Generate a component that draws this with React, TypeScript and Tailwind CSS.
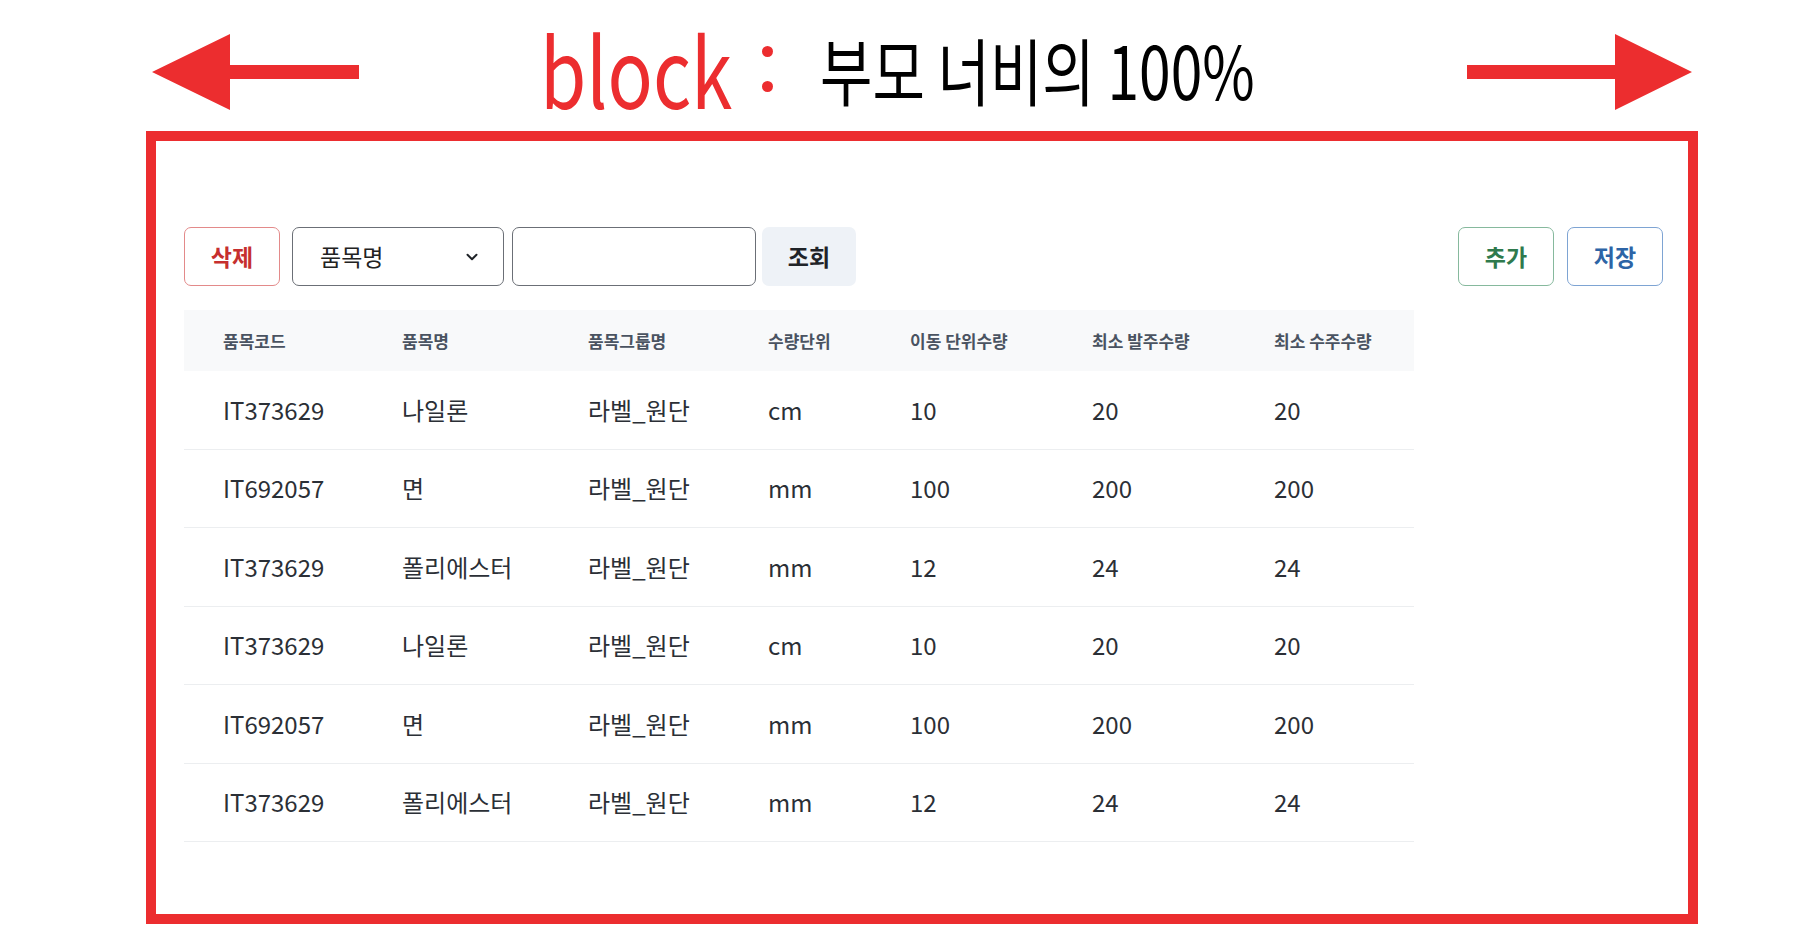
import React from 'react';
import { ChevronDown } from 'lucide-react';

const FONT = '"Noto Sans CJK KR", "Noto Sans", sans-serif';

interface Item {
  code: string;
  name: string;
  group: string;
  unit: string;
  moveQty: number;
  minOrder: number;
  minSales: number;
}

const items: Item[] = [
  { code: 'IT373629', name: '나일론', group: '라벨_원단', unit: 'cm', moveQty: 10, minOrder: 20, minSales: 20 },
  { code: 'IT692057', name: '면', group: '라벨_원단', unit: 'mm', moveQty: 100, minOrder: 200, minSales: 200 },
  { code: 'IT373629', name: '폴리에스터', group: '라벨_원단', unit: 'mm', moveQty: 12, minOrder: 24, minSales: 24 },
  { code: 'IT373629', name: '나일론', group: '라벨_원단', unit: 'cm', moveQty: 10, minOrder: 20, minSales: 20 },
  { code: 'IT692057', name: '면', group: '라벨_원단', unit: 'mm', moveQty: 100, minOrder: 200, minSales: 200 },
  { code: 'IT373629', name: '폴리에스터', group: '라벨_원단', unit: 'mm', moveQty: 12, minOrder: 24, minSales: 24 },
];

// column widths, first one includes the table's left padding
const colClass = [
  'w-[218px] pl-[39px]',
  'w-[186px]',
  'w-[180px]',
  'w-[142px]',
  'w-[182px]',
  'w-[182px]',
  'flex-1',
];

const headers = ['품목코드', '품목명', '품목그룹명', '수량단위', '이동 단위수량', '최소 발주수량', '최소 수주수량'];

function LeftArrow() {
  return (
    <svg width="207" height="76" viewBox="0 0 207 76">
      <polygon points="0,38 78,0 78,31 207,31 207,45 78,45 78,76" fill="#ec2d2f" />
    </svg>
  );
}

function RightArrow() {
  return (
    <svg width="225" height="76" viewBox="0 0 225 76">
      <polygon points="225,38 148,0 148,31 0,31 0,45 148,45 148,76" fill="#ec2d2f" />
    </svg>
  );
}

export default function App() {
  return (
    <div className="w-[1800px] h-[948px] bg-white overflow-hidden" style={{ fontFamily: FONT }}>
      {/* Title */}
      <div className="h-[131px] pt-[4px] flex items-center">
        <div className="ml-[152px] shrink-0 mt-[8px]">
          <LeftArrow />
        </div>
        <span className="ml-[181px] shrink-0 inline-block origin-left scale-x-[0.78] -mr-[54px] text-[96px] leading-[110px] font-normal text-[#ec2d2f] whitespace-nowrap">
          block
        </span>
        <div className="ml-[29px] w-[24px] shrink-0 flex flex-col items-start justify-center gap-[24px] mt-[2px]">
          <div className="w-[11px] h-[11px] rounded-full bg-[#ec2d2f]" />
          <div className="w-[11px] h-[11px] rounded-full bg-[#ec2d2f]" />
        </div>
        <span className="ml-[34px] shrink-0 inline-block origin-left scale-x-[0.78] -mr-[122px] text-[73px] leading-[110px] font-normal text-black whitespace-nowrap">
          부모 너비의 100%
        </span>
        <div className="ml-[212px] shrink-0 mt-[8px]">
          <RightArrow />
        </div>
      </div>

      {/* Block box */}
      <div className="ml-[146px] w-[1552px] h-[793px] border-[10px] border-[#ec2d2f] pt-[86px] pl-[28px] pr-[25px]">
        <div className="flex items-center justify-between">
          <div className="flex items-center">
            <button className="w-[96px] h-[59px] rounded-[7px] border border-[#e38a8a] text-[#c62f2f] text-[23px] font-bold bg-white">
              삭제
            </button>
            <div className="ml-[12px] w-[212px] h-[59px] rounded-[7px] border border-[#6b6f76] flex items-center justify-between pl-[27px] pr-[22px]">
              <span className="text-[23px] text-[#222]">품목명</span>
              <ChevronDown size={18} strokeWidth={2.6} color="#1f2328" />
            </div>
            <input className="ml-[8px] w-[244px] h-[59px] rounded-[7px] border border-[#6b6f76] outline-none px-3" />
            <button className="ml-[6px] w-[94px] h-[59px] rounded-[7px] bg-[#eef2f7] text-[#1f2328] text-[23px] font-bold">
              조회
            </button>
          </div>
          <div className="flex items-center gap-[13px]">
            <button className="w-[96px] h-[59px] rounded-[7px] border border-[#86b99d] text-[#2f7a4d] text-[23px] font-bold bg-white">
              추가
            </button>
            <button className="w-[96px] h-[59px] rounded-[7px] border border-[#7ea4d3] text-[#2d64a6] text-[23px] font-bold bg-white">
              저장
            </button>
          </div>
        </div>

        {/* Table */}
        <div className="mt-[24px] w-[1230px]">
          <div className="h-[61px] bg-[#f8f9fa] flex items-center">
            {headers.map((h, i) => (
              <div key={h} className={`${colClass[i]} text-[17px] font-semibold text-[#4a5361]`}>
                {h}
              </div>
            ))}
          </div>
          {items.map((it, r) => {
            const cells = [it.code, it.name, it.group, it.unit, it.moveQty, it.minOrder, it.minSales];
            return (
              <div key={r} className="h-[78.5px] border-b border-[#eceef0] flex items-center">
                {cells.map((c, i) => (
                  <div key={i} className={`${colClass[i]} text-[24px] text-[#2b2f36]`}>
                    {c}
                  </div>
                ))}
              </div>
            );
          })}
        </div>
      </div>
    </div>
  );
}
